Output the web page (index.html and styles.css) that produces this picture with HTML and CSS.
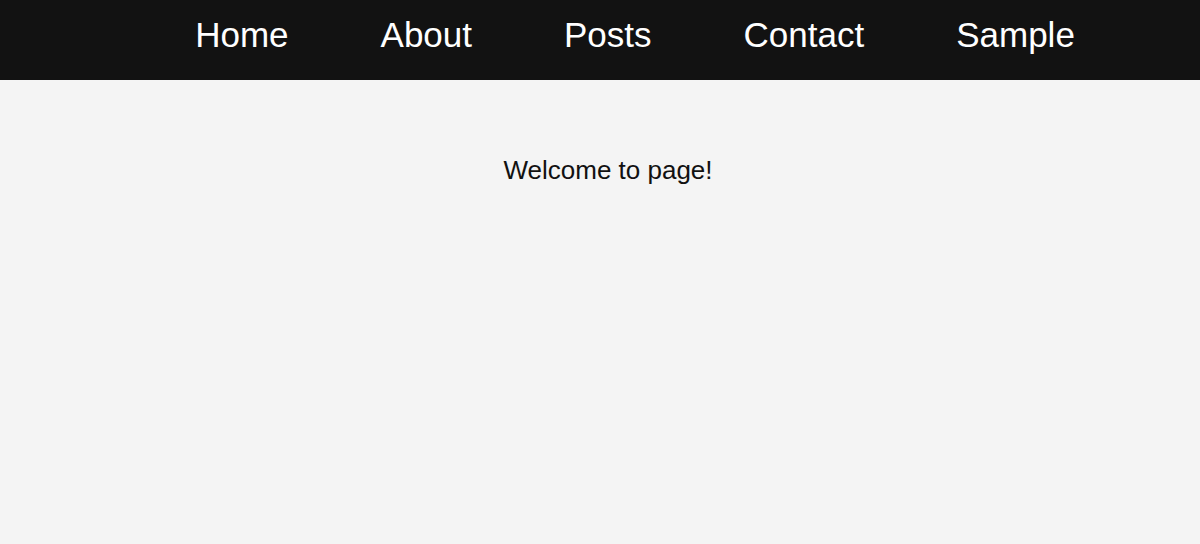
FILE: index.html
```html
<!DOCTYPE html>
<html lang="en">
<head>
    <meta charset="UTF-8">
    <meta name="viewport" content="width=device-width, initial-scale=1.0">
    <title>Welcome</title>
    <link rel="stylesheet" href="styles.css">
</head>
<body>
    <nav class="top-nav">
        <ul class="nav-list">
            <li><a href="#">Home</a></li>
            <li><a href="#">About</a></li>
            <li><a href="#">Posts</a></li>
            <li><a href="#">Contact</a></li>
            <li><a href="#">Sample</a></li>
        </ul>
    </nav>
    <div class="main-content">
        <p class="welcome">Welcome to page!</p>
    </div>
</body>
</html>
```

FILE: styles.css
```css
body {
    margin: 0;
    background: #f4f4f4;
    font-family: 'Liberation Sans', Arial, sans-serif;
    color: #111;
}
.top-nav {
    background-color: #121212;
    height: 80px;
    box-sizing: border-box;
    padding-top: 15px;
}
.nav-list {
    display: flex;
    justify-content: center;
    gap: 92px;
    list-style: none;
    margin: 0;
    padding: 0 0 0 70px;
}
.nav-list a {
    color: #fff;
    text-decoration: none;
    font-size: 35px;
}
.main-content {
    text-align: center;
    padding-left: 16px;
}
.welcome {
    font-size: 26px;
    margin: 75px 0 0;
}
```
